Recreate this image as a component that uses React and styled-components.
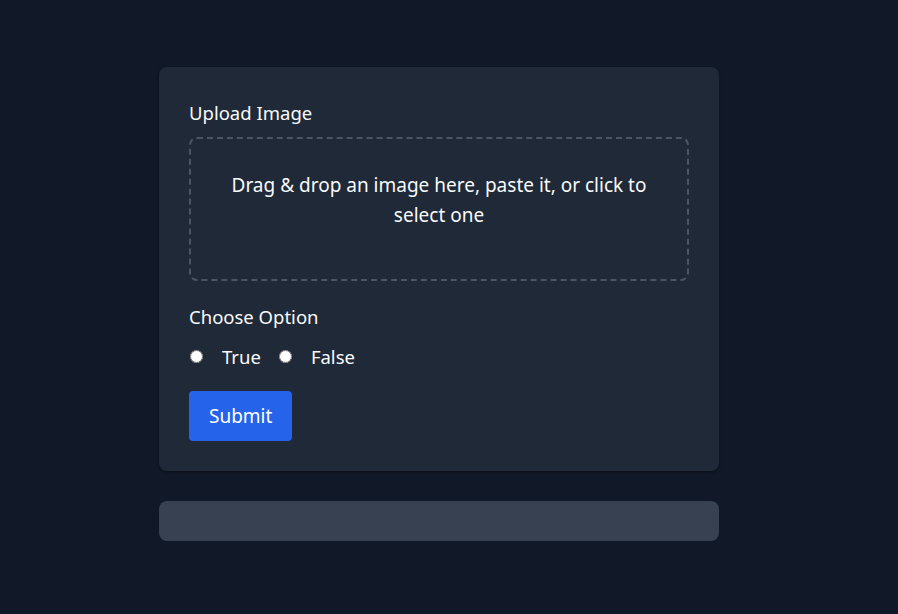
import React, { useState } from "react";
import styled, { createGlobalStyle } from "styled-components";

const GlobalStyle = createGlobalStyle`
    html, body {
        margin: 0;
        padding: 0;
        background-color: #111827;
        font-family: "Noto Sans", "Open Sans", sans-serif;
        color: #f9fafb;
    }
`;

const Page = styled.main`
    min-height: 100vh;
    padding: 67px 20px 0 0;
    box-sizing: border-box;
    display: flex;
    flex-direction: column;
    align-items: center;
`;

const Card = styled.form`
    width: 560px;
    box-sizing: border-box;
    padding: 30px;
    background-color: #1f2937;
    border-radius: 8px;
    box-shadow: 0 1px 3px rgba(0, 0, 0, 0.4);
    display: flex;
    flex-direction: column;
`;

const Label = styled.div`
    font-size: 18.5px;
    line-height: 28px;
    margin-top: ${props => props.spaced ? "22px" : "2px"};
    margin-bottom: ${props => props.spaced ? "13px" : "10px"};
`;

const DropZone = styled.div`
    border: 2px dashed #4b5563;
    border-radius: 8px;
    padding: 31px 40px 49px;
    text-align: center;
    font-size: 19px;
    line-height: 30px;
    cursor: pointer;
`;

const RadioRow = styled.div`
    display: flex;
    align-items: center;
    height: 24px;
    gap: 17px;
`;

const RadioLabel = styled.label`
    display: flex;
    align-items: center;
    gap: 19px;
    font-size: 18.5px;
    cursor: pointer;
`;

const Radio = styled.input`
    margin: 0 0 0 1px;
    width: 13px;
    height: 13px;
`;

const SubmitButton = styled.button`
    align-self: flex-start;
    margin-top: 23px;
    height: 50px;
    padding: 0 20px;
    border: none;
    border-radius: 4px;
    background-color: #2563eb;
    color: #fff;
    font-family: inherit;
    font-size: 19px;
    cursor: pointer;
`;

const ResultBar = styled.div`
    width: 560px;
    height: 40px;
    margin-top: 30px;
    background-color: #374151;
    border-radius: 8px;
    box-shadow: 0 0 0 1px rgba(17, 24, 39, 0.6);
`;

const App = () => {
    const [option, setOption] = useState(null);

    return (
        <>
            <GlobalStyle />
            <Page>
                <Card onSubmit={e => e.preventDefault()}>
                    <Label>Upload Image</Label>
                    <DropZone>
                        Drag &amp; drop an image here, paste it, or click to<br />select one
                    </DropZone>
                    <Label spaced>Choose Option</Label>
                    <RadioRow>
                        <RadioLabel>
                            <Radio type="radio" name="opt" checked={option === true} onChange={() => setOption(true)} />
                            True
                        </RadioLabel>
                        <RadioLabel>
                            <Radio type="radio" name="opt" checked={option === false} onChange={() => setOption(false)} />
                            False
                        </RadioLabel>
                    </RadioRow>
                    <SubmitButton type="submit">Submit</SubmitButton>
                </Card>
                <ResultBar />
            </Page>
        </>
    );
};

export default App;
